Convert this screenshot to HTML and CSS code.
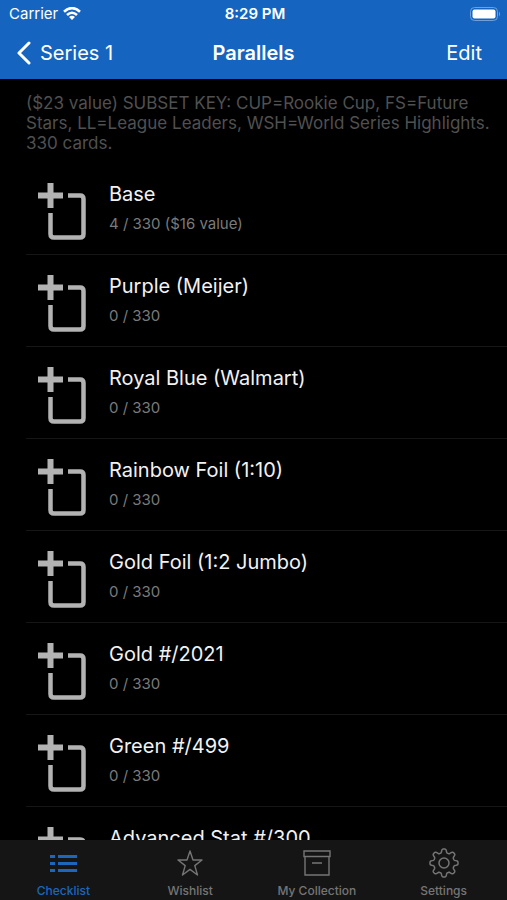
FILE: index.html
```html
<!DOCTYPE html>
<html lang="en">

<head>
    <meta charset="UTF-8">
    <meta name="viewport" content="width=device-width, initial-scale=1.0">
    <title>Parallels</title>
    <link rel="stylesheet" href="styles.css">
</head>

<body>
    <!-- shared icons -->
    <svg class="sprite" aria-hidden="true">
        <symbol id="add-card" viewBox="0 0 48 58">
            <path d="M12.5 0V25M0 12.5H25" fill="none" stroke="#b3b3b3" stroke-width="6" />
            <path d="M30 12.5H42Q45.500 12.5 45.500 16V51Q45.500 54.500 42 54.500H16Q12.500 54.500 12.500 51V30" fill="none" stroke="#b3b3b3" stroke-width="4.500" />
        </symbol>
    </svg>

    <header class="header">
        <div class="status-bar">
            <div class="carrier">
                <span>Carrier</span>
                <svg width="18" height="14" viewBox="0 0 18 14" fill="none" stroke="#fff" stroke-width="2.600">
                    <path d="M1 4.700Q9-2.500 17 4.700M4 8Q9 3.500 14 8" />
                    <path d="M9 13L6 10Q9 7.500 12 10Z" fill="#fff" stroke="none" />
                </svg>
            </div>
            <div class="time">8:29 PM</div>
            <svg class="battery" width="31" height="14" viewBox="0 0 31 14">
                <rect x="0.500" y="0.500" width="27" height="13" rx="4" fill="none" stroke="#6f9fd8" />
                <rect x="2.500" y="2.500" width="23" height="9" rx="2" fill="#fff" />
                <path d="M29 4.500Q31 7 29 9.500Z" fill="#6f9fd8" />
            </svg>
        </div>
        <nav class="nav-bar">
            <a class="back" href="#">
                <svg width="14" height="24" viewBox="0 0 14 24" fill="none" stroke="#fff" stroke-width="3" stroke-linecap="round" stroke-linejoin="round">
                    <path d="M12 2L2 12L12 22" />
                </svg>
                <span>Series 1</span>
            </a>
            <h1>Parallels</h1>
            <button class="edit" type="button">Edit</button>
        </nav>
    </header>

    <main class="content">
        <p class="summary">($23 value) SUBSET KEY: CUP=Rookie Cup, FS=Future Stars, LL=League Leaders, WSH=World Series Highlights. 330 cards.</p>
        <ul class="list">
            <li class="row">
                <svg class="add"><use href="#add-card" /></svg>
                <div class="details">
                    <h2>Base</h2>
                    <p class="count">4 / 330 ($16 value)</p>
                </div>
            </li>
            <li class="row">
                <svg class="add"><use href="#add-card" /></svg>
                <div class="details">
                    <h2>Purple (Meijer)</h2>
                    <p class="count">0 / 330</p>
                </div>
            </li>
            <li class="row">
                <svg class="add"><use href="#add-card" /></svg>
                <div class="details">
                    <h2>Royal Blue (Walmart)</h2>
                    <p class="count">0 / 330</p>
                </div>
            </li>
            <li class="row">
                <svg class="add"><use href="#add-card" /></svg>
                <div class="details">
                    <h2>Rainbow Foil (1:10)</h2>
                    <p class="count">0 / 330</p>
                </div>
            </li>
            <li class="row">
                <svg class="add"><use href="#add-card" /></svg>
                <div class="details">
                    <h2>Gold Foil (1:2 Jumbo)</h2>
                    <p class="count">0 / 330</p>
                </div>
            </li>
            <li class="row">
                <svg class="add"><use href="#add-card" /></svg>
                <div class="details">
                    <h2>Gold #/2021</h2>
                    <p class="count">0 / 330</p>
                </div>
            </li>
            <li class="row">
                <svg class="add"><use href="#add-card" /></svg>
                <div class="details">
                    <h2>Green #/499</h2>
                    <p class="count">0 / 330</p>
                </div>
            </li>
            <li class="row">
                <svg class="add"><use href="#add-card" /></svg>
                <div class="details">
                    <h2>Advanced Stat #/300</h2>
                    <p class="count">0 / 330</p>
                </div>
            </li>
        </ul>
    </main>

    <nav class="tab-bar">
        <a class="tab active" href="#">
            <svg width="30" height="30" viewBox="0 0 30 30" fill="none" stroke="currentColor" stroke-width="3.200">
                <path d="M2 8.500H7M10 8.500H29M2 15.500H7M10 15.500H29M2 22.500H7M10 22.500H29" />
            </svg>
            <span>Checklist</span>
        </a>
        <a class="tab" href="#">
            <svg width="30" height="30" viewBox="0 0 30 30" fill="none" stroke="currentColor" stroke-width="1.400" stroke-linejoin="round">
                <path d="M15 3L18 12H27L19.800 17.600L22.500 27L15 21.400L7.500 27L10.200 17.600L3 12H12Z" />
            </svg>
            <span>Wishlist</span>
        </a>
        <a class="tab" href="#">
            <svg width="30" height="30" viewBox="0 0 30 30" fill="none" stroke="currentColor" stroke-width="1.400">
                <path d="M2 3H28V8.500H2ZM3 8.500V27H27V8.500M10 15H20" />
            </svg>
            <span>My Collection</span>
        </a>
        <a class="tab" href="#">
            <svg width="30" height="30" viewBox="0 0 30 30" fill="none" stroke="currentColor" stroke-width="1.500" stroke-linejoin="round">
                <circle cx="15" cy="15" r="5" />
                <path id="gear" d="" />
            </svg>
            <span>Settings</span>
        </a>
    </nav>

    <script>
        // Outline of the settings gear: eight rounded teeth around the centre
        const steps = 160;
        let outline = '';
        for (let i = 0; i < steps; i++) {
            const angle = i / steps * Math.PI * 2;
            const radius = 12.2 + 1.9 * Math.tanh(2 * Math.cos(angle * 8));
            const x = 15 + radius * Math.sin(angle);
            const y = 15 - radius * Math.cos(angle);
            outline += (i ? 'L' : 'M') + x.toFixed(2) + ' ' + y.toFixed(2);
        }
        document.getElementById('gear').setAttribute('d', outline + 'Z');
    </script>
</body>

</html>
```
FILE: styles.css
```css
* {
    box-sizing: border-box;
}

body {
    display: flex;
    flex-direction: column;
    height: 100vh;
    margin: 0;
    background: #000;
    color: #f2f2f2;
    font-family: Inter, "Liberation Sans", sans-serif;
}

h1, h2, p, ul {
    margin: 0;
    padding: 0;
}

a {
    color: inherit;
    text-decoration: none;
}

.sprite {
    position: absolute;
    width: 0;
    height: 0;
}

.header {
    background: #1565c0;
    color: #fff;
}

.status-bar {
    display: grid;
    grid-template-columns: 1fr auto 1fr;
    align-items: center;
    height: 27px;
    padding: 0 6px 0 9px;
    font-size: 15px;
}

.carrier {
    display: flex;
    align-items: center;
    gap: 5px;
}

.time {
    font-weight: 600;
}

.battery {
    justify-self: end;
}

.nav-bar {
    display: grid;
    grid-template-columns: 1fr auto 1fr;
    align-items: center;
    height: 52px;
    padding: 0 17px;
    font-size: 20px;
}

.nav-bar h1 {
    font-size: 20px;
    font-weight: 600;
}

.back {
    display: flex;
    align-items: center;
    gap: 9px;
}

.edit {
    justify-self: end;
    padding: 0 8px;
    border: none;
    background: none;
    color: inherit;
    font: inherit;
    cursor: pointer;
}

.content {
    flex: 1;
    min-height: 0;
    overflow-y: auto;
    scrollbar-width: none;
}

.summary {
    padding: 14px 14px 10px 26px;
    color: #505050;
    font-size: 17px;
    line-height: 20px;
}

.list {
    list-style: none;
}

.row {
    display: flex;
    align-items: flex-start;
    gap: 23px;
    height: 92px;
    margin-left: 26px;
    padding-left: 12px;
    border-bottom: 1px solid #161616;
}

.add {
    width: 48px;
    height: 58px;
    margin-top: 20px;
}

.details {
    padding-top: 17px;
}

.row h2 {
    font-size: 20px;
    font-weight: 400;
    line-height: 28px;
}

.count {
    margin-top: 6px;
    color: #7a7a7a;
    font-size: 15px;
    line-height: 20px;
}

.tab-bar {
    display: grid;
    grid-template-columns: repeat(4, 1fr);
    height: 60px;
    background: #151515;
    color: #757575;
}

.tab {
    display: flex;
    flex-direction: column;
    align-items: center;
    gap: 5px;
    padding-top: 8px;
    font-size: 12px;
    font-weight: 500;
    line-height: 16px;
}

.tab.active {
    color: #1d66bd;
}
```
